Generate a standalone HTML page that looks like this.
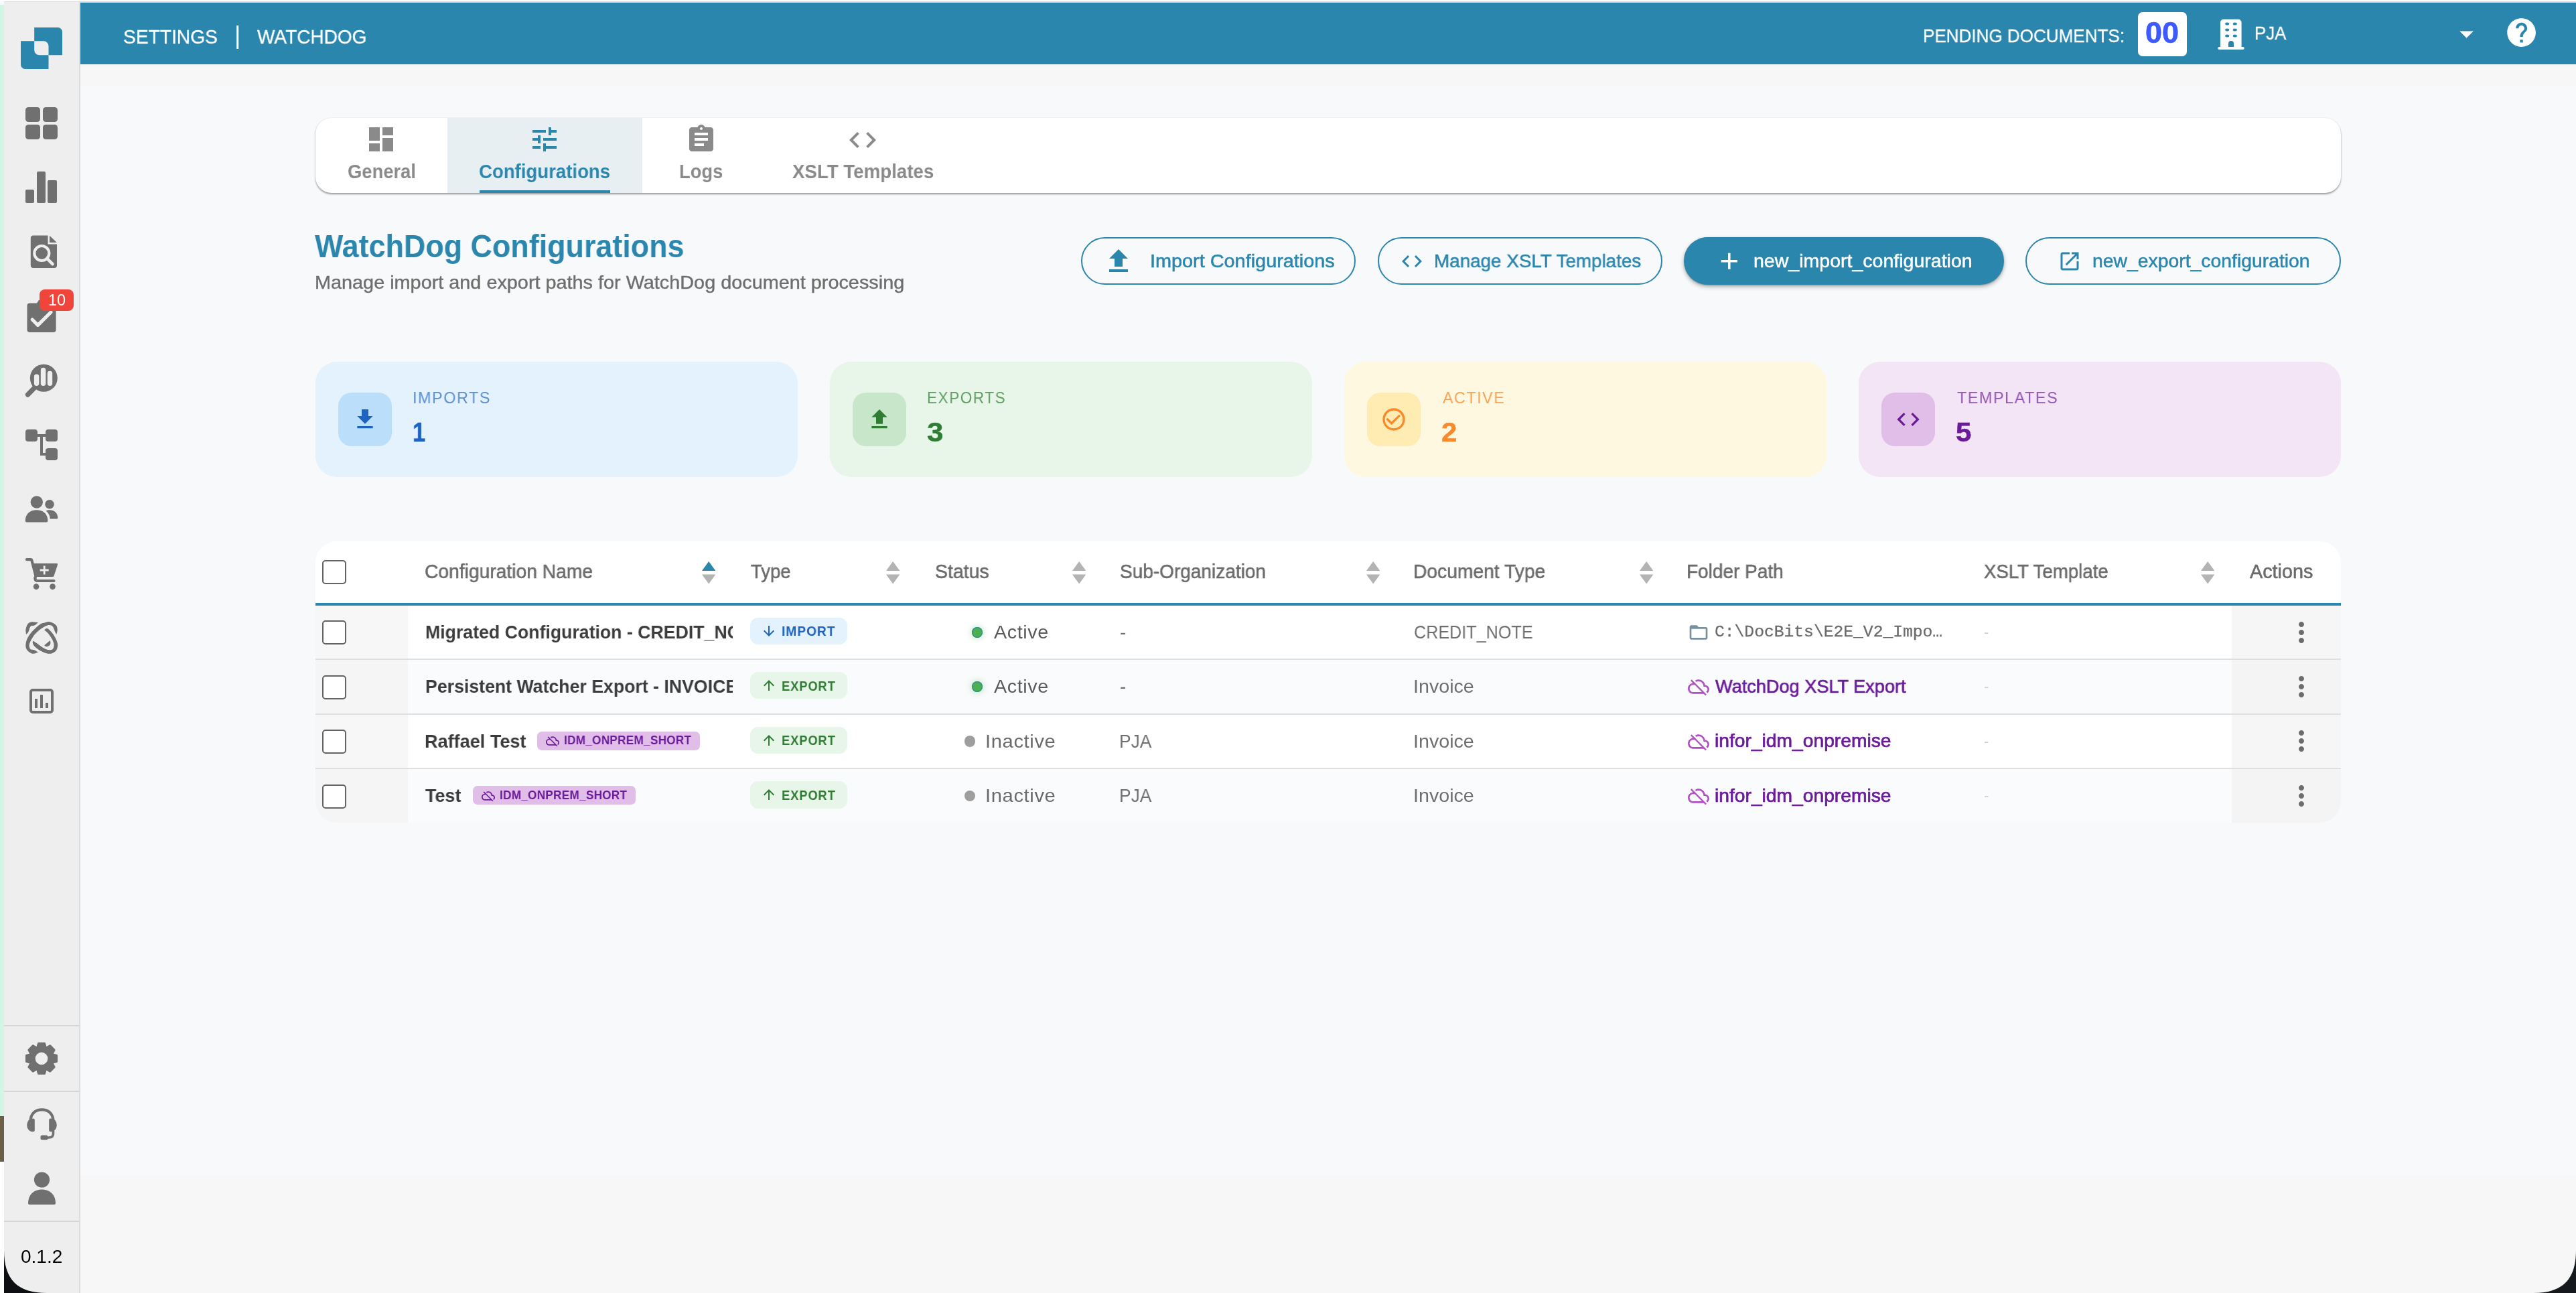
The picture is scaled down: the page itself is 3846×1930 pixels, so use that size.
<!DOCTYPE html>
<html lang="en"><head><meta charset="utf-8"><title>WatchDog Configurations</title>
<style>
html,body{margin:0;padding:0;}
body{width:3846px;height:1930px;position:relative;overflow:hidden;background:#f8f9fb;font-family:"Liberation Sans",sans-serif;}
.b{position:absolute;display:block;}
.t{position:absolute;white-space:nowrap;line-height:1em;font-family:"Liberation Sans",sans-serif;will-change:transform;}
</style></head><body>
<div class="b" style="left:6.00px;top:3.00px;width:3840.00px;height:1927.00px;background:#f8f9fb;"></div>
<div class="b" style="left:120.00px;top:1754.00px;width:3726.00px;height:176.00px;background:#f7f7f7;"></div>
<div class="b" style="left:0.00px;top:7.00px;width:6.00px;height:1659.00px;background:#d3f5e4;"></div>
<div class="b" style="left:0.00px;top:1666.00px;width:6.00px;height:68.00px;background:#6b5f48;"></div>
<div class="b" style="left:0.00px;top:1734.00px;width:6.00px;height:196.00px;background:#ffffff;"></div>
<div class="b" style="left:0.00px;top:0.00px;width:3846.00px;height:2.00px;background:#fdfdfd;"></div>
<div class="b" style="left:6.00px;top:2.00px;width:3840.00px;height:2.00px;background:#dcdcdc;"></div>
<div class="b" style="left:120.00px;top:4.00px;width:3726.00px;height:92.00px;background:#2a86ad;"></div>
<div class="b" style="left:120.00px;top:96.00px;width:3726.00px;height:33.00px;background:linear-gradient(#fcfcfc 0,#fcfcfc 1px,#f7f7f7 1.2px,#f7f7f7 30px,#f8f9fb 33px);"></div>
<div class="b" style="left:6.00px;top:3.00px;width:112.00px;height:1927.00px;background:#eeeeee;"></div>
<div class="b" style="left:118.00px;top:3.00px;width:2.00px;height:1927.00px;background:#dcdcdc;"></div>
<div class="b" style="left:6.00px;top:1530.00px;width:112.00px;height:2.00px;background:#d6d6d6;"></div>
<div class="b" style="left:6.00px;top:1628.00px;width:112.00px;height:2.00px;background:#d6d6d6;"></div>
<div class="b" style="left:6.00px;top:1822.00px;width:112.00px;height:2.00px;background:#d6d6d6;"></div>
<svg class="b" style="left:6.00px;top:1866.00px;" width="64.00" height="64.00" viewBox="0 0 64 64"><path d="M0 0 C0 44 20 64 64 64 L0 64 Z" fill="#0d0f12"/></svg>
<svg class="b" style="left:3782.00px;top:1866.00px;" width="64.00" height="64.00" viewBox="0 0 64 64"><path d="M64 0 C64 44 44 64 0 64 L64 64 Z" fill="#15181c"/></svg>
<svg class="b" style="left:31.00px;top:41.00px;" width="62.00" height="62.00" viewBox="0 0 62 62"><path fill="#2a86ad" d="M20.2 0 H55.5 a6.5 6.5 0 0 1 6.5 6.5 V41.3 H41.5 V27.8 a7.5 7.5 0 0 0 -7.5 -7.5 H20.2 Z"/><path fill="#2a86ad" d="M0 20.3 H20.2 V33.8 a7.5 7.5 0 0 0 7.5 7.5 H41.5 V62 H6.5 a6.5 6.5 0 0 1 -6.5 -6.5 Z"/></svg>
<div class="b" style="left:37.80px;top:159.80px;width:22.30px;height:22.20px;background:#707070;border-radius:4.5px;"></div>
<div class="b" style="left:63.90px;top:159.80px;width:22.30px;height:22.20px;background:#707070;border-radius:4.5px;"></div>
<div class="b" style="left:37.80px;top:186.00px;width:22.30px;height:22.20px;background:#707070;border-radius:4.5px;"></div>
<div class="b" style="left:63.90px;top:186.00px;width:22.30px;height:22.20px;background:#707070;border-radius:4.5px;"></div>
<div class="b" style="left:37.80px;top:282.80px;width:13.50px;height:20.40px;background:#707070;border-radius:2px;"></div>
<div class="b" style="left:54.80px;top:255.90px;width:13.30px;height:47.30px;background:#707070;border-radius:2px;"></div>
<div class="b" style="left:71.20px;top:269.20px;width:13.70px;height:34.00px;background:#707070;border-radius:2px;"></div>
<svg class="b" style="left:45.00px;top:351.00px;" width="41.00" height="49.00" viewBox="0 0 41 49"><path fill="#707070" d="M4.8 .6 H26.5 V13.4 H40 V45 a4 4 0 0 1 -4 4 H4.8 a4 4 0 0 1 -4 -4 V4.6 a4 4 0 0 1 4 -4 Z M29 .8 L39.8 11 H29 Z"/><circle cx="17.3" cy="27" r="11" fill="none" stroke="#eeeeee" stroke-width="4.2"/><path d="M25.5 35.2 L33.5 43.2" stroke="#eeeeee" stroke-width="4.6" stroke-linecap="round"/></svg>
<svg class="b" style="left:40.00px;top:446.00px;" width="45.00" height="51.00" viewBox="0 0 45 51"><path fill="#707070" d="M4.5 6.6 H15 L18 2 H27 L30 6.6 H39.6 a4 4 0 0 1 4 4 V46 a4 4 0 0 1 -4 4 H4.5 a4 4 0 0 1 -4 -4 V10.6 a4 4 0 0 1 4 -4 Z"/><path d="M8.2 31 L16.5 39.3 L36 20" fill="none" stroke="#eeeeee" stroke-width="5.2" stroke-linecap="round" stroke-linejoin="round"/></svg>
<div class="b" style="left:59.00px;top:432.00px;width:51.00px;height:32.00px;background:#f0453a;border-radius:8px;"></div>
<div class="t" id="badge" style="left:72.00px;top:436.53px;font-size:23.5px;color:#fff;font-weight:400;">10</div>
<svg class="b" style="left:36.00px;top:542.00px;" width="54.00" height="52.00" viewBox="0 0 54 52"><circle cx="29.3" cy="22.3" r="20.5" fill="#707070"/><path d="M15.3 37 L5.6 47" stroke="#707070" stroke-width="7.4" stroke-linecap="round"/><rect x="14.9" y="16.5" width="7.4" height="17.4" rx="3.7" fill="#eeeeee"/><rect x="24.8" y="6.8" width="7.5" height="27.1" rx="3.7" fill="#eeeeee"/><rect x="34.8" y="11.8" width="7.4" height="22.1" rx="3.7" fill="#eeeeee"/></svg>
<div class="b" style="left:37.80px;top:641.40px;width:18.40px;height:18.00px;background:#707070;border-radius:4px;"></div>
<div class="b" style="left:68.00px;top:641.40px;width:18.20px;height:18.00px;background:#707070;border-radius:4px;"></div>
<div class="b" style="left:68.00px;top:668.70px;width:18.20px;height:18.20px;background:#707070;border-radius:4px;"></div>
<div class="b" style="left:55.00px;top:648.00px;width:14.00px;height:4.30px;background:#707070;"></div>
<div class="b" style="left:60.00px;top:648.00px;width:4.30px;height:31.70px;background:#707070;border-radius:0 0 0 2px;"></div>
<div class="b" style="left:60.00px;top:675.50px;width:9.00px;height:4.20px;background:#707070;"></div>
<svg class="b" style="left:37.00px;top:738.00px;" width="50.00" height="43.00" viewBox="0 0 50 43"><circle cx="17.8" cy="11.5" r="9.2" fill="#707070"/><path fill="#707070" d="M.8 39.5 C.8 29 8 23.3 17.6 23.3 S34.4 29 34.4 39.5 a2 2 0 0 1 -2 2 H2.8 a2 2 0 0 1 -2 -2 Z"/><circle cx="37" cy="14.7" r="6.8" fill="#707070"/><path fill="#707070" d="M31.5 24.6 C33.5 23.6 35.2 23.3 37.2 23.3 C44 23.3 49.3 28 49.3 35 a1.6 1.6 0 0 1 -1.6 1.6 H37.8 C37.6 31.5 35.3 27.4 31.5 24.6 Z"/></svg>
<svg class="b" style="left:37.00px;top:832.00px;" width="50.00" height="49.00" viewBox="0 0 50 49"><path fill="none" stroke="#707070" stroke-width="4.2" stroke-linecap="round" stroke-linejoin="round" d="M3 3.2 H8.5 a2 2 0 0 1 2 1.5 L16.5 28 C15 30 14.5 35 19 35 H43.5"/><path fill="#707070" d="M11.3 9 H47.8 a1.4 1.4 0 0 1 1.3 1.8 L43.6 27.6 a2 2 0 0 1 -1.9 1.3 H16.5 Z"/><circle cx="17.1" cy="43.6" r="4.3" fill="#707070"/><circle cx="41.5" cy="43.6" r="4.3" fill="#707070"/><path d="M22.7 19 H35.7 M29.2 12.5 V25.5" stroke="#eeeeee" stroke-width="2.8"/></svg>
<svg class="b" style="left:30.00px;top:920.00px;" width="64.00" height="64.00" viewBox="0 0 64 64"><path fill="#707070" d="M9.2 27 C9.07 25.80 8.03 22.40 8.40 19.80 C8.77 17.20 9.92 13.33 11.40 11.40 C12.88 9.47 14.70 8.57 17.30 8.20 C19.90 7.83 25.38 9.03 27.00 9.20 C26.05 9.93 23.08 12.73 21.30 13.60 C19.52 14.47 17.45 13.78 16.30 14.40 C15.15 15.02 15.05 15.82 14.40 17.30 C13.75 18.78 13.27 21.68 12.40 23.30 C11.53 24.92 9.73 26.38 9.20 27.00 Z"/><path fill="#707070" d="M54.5 26.7 C54.70 25.55 55.87 22.10 55.70 19.80 C55.53 17.50 55.37 14.83 53.50 12.90 C51.63 10.97 47.15 8.82 44.50 8.20 C41.85 7.58 40.07 8.58 37.60 9.20 C35.13 9.82 32.67 9.97 29.70 11.90 C26.73 13.83 22.85 17.50 19.80 20.80 C16.75 24.10 13.30 28.17 11.40 31.70 C9.50 35.23 8.65 39.03 8.40 42.00 C8.15 44.97 8.58 47.33 9.90 49.50 C11.22 51.67 14.40 54.02 16.30 55.00 C18.20 55.98 19.52 55.62 21.30 55.40 C23.08 55.18 26.05 53.98 27.00 53.70 C26.05 53.12 23.08 50.90 21.30 50.20 C19.52 49.50 17.50 50.12 16.30 49.50 C15.10 48.88 14.47 47.98 14.10 46.50 C13.73 45.02 13.15 43.40 14.10 40.60 C15.05 37.80 17.53 32.92 19.80 29.70 C22.07 26.48 24.82 23.77 27.70 21.30 C30.58 18.83 34.38 16.27 37.10 14.90 C39.82 13.53 42.10 13.10 44.00 13.10 C45.90 13.10 47.42 13.95 48.50 14.90 C49.58 15.85 49.83 17.32 50.50 18.80 C51.17 20.28 51.83 22.48 52.50 23.80 C53.17 25.12 54.17 26.22 54.50 26.70 Z"/><path fill="#707070" d="M36.1 20.3 C36.85 19.93 38.78 17.52 40.60 18.10 C42.42 18.68 45.02 21.53 47.00 23.80 C48.98 26.07 51.05 29.07 52.50 31.70 C53.95 34.33 55.13 37.30 55.70 39.60 C56.27 41.90 56.27 43.52 55.90 45.50 C55.53 47.48 54.98 49.85 53.50 51.50 C52.02 53.15 49.32 54.78 47.00 55.40 C44.68 56.02 42.48 55.93 39.60 55.20 C36.72 54.47 32.75 52.77 29.70 51.00 C26.65 49.23 23.12 46.50 21.30 44.60 C19.48 42.70 19.13 40.97 18.80 39.60 C18.47 38.23 19.22 36.93 19.30 36.40 C20.22 37.02 22.65 38.58 24.80 40.10 C26.95 41.62 29.73 43.93 32.20 45.50 C34.67 47.07 37.38 48.72 39.60 49.50 C41.82 50.28 43.93 50.37 45.50 50.20 C47.07 50.03 48.17 49.43 49.00 48.50 C49.83 47.57 50.33 46.08 50.50 44.60 C50.67 43.12 50.58 41.58 50.00 39.60 C49.42 37.62 48.32 35.02 47.00 32.70 C45.68 30.38 43.92 27.77 42.10 25.70 C40.28 23.63 37.10 21.20 36.10 20.30 Z"/><path fill="#707070" d="M44.8 35.9 L36.1 43.3 Q39 46.8 43.6 43.8 Q46.6 40.5 44.8 35.9 Z"/></svg>
<div class="b" style="left:44.00px;top:1028.40px;width:36.20px;height:36.50px;background:transparent;border:4.2px solid #707070;border-radius:5px;box-sizing:border-box;"></div>
<div class="b" style="left:52.00px;top:1043.00px;width:4.20px;height:13.70px;background:#707070;"></div>
<div class="b" style="left:60.00px;top:1037.00px;width:4.30px;height:19.70px;background:#707070;"></div>
<div class="b" style="left:68.00px;top:1048.90px;width:4.20px;height:7.80px;background:#707070;"></div>
<svg class="b" style="left:36.00px;top:1554.00px;" width="52.00" height="52.00" viewBox="0 0 52 52"><path fill="#707070" stroke="#707070" stroke-width="3" stroke-linejoin="round" d="M19.62 9.70 L21.51 3.44 L30.49 3.44 L32.38 9.70 L33.01 9.97 L38.78 6.88 L45.12 13.22 L42.03 18.99 L42.30 19.62 L48.56 21.51 L48.56 30.49 L42.30 32.38 L42.03 33.01 L45.12 38.78 L38.78 45.12 L33.01 42.03 L32.38 42.30 L30.49 48.56 L21.51 48.56 L19.62 42.30 L18.99 42.03 L13.22 45.12 L6.88 38.78 L9.97 33.01 L9.70 32.38 L3.44 30.49 L3.44 21.51 L9.70 19.62 L9.97 18.99 L6.88 13.22 L13.22 6.88 L18.99 9.97 Z"/><circle cx="26" cy="26" r="9.3" fill="#eeeeee"/></svg>
<svg class="b" style="left:38.00px;top:1652.00px;" width="50.00" height="52.00" viewBox="0 0 50 52"><path fill="none" stroke="#707070" stroke-width="4.2" stroke-linecap="round" d="M7.5 22 C7.5 10 15 4.3 24.500 4.300 S41.5 10 41.5 22"/><path fill="#707070" d="M11.5 17.5 a2.300 2.300 0 0 1 2.300 2.300 V35 a2.300 2.300 0 0 1 -2.300 2.300 C6 37.300 2.300 33 2.300 27.400 S6 17.5 11.500 17.500 Z"/><path fill="#707070" d="M37.5 17.5 a2.300 2.300 0 0 0 -2.300 2.300 V35 a2.300 2.300 0 0 0 2.300 2.300 C43 37.300 46.700 33 46.700 27.400 S43 17.5 37.500 17.500 Z"/><path fill="none" stroke="#707070" stroke-width="3.6" stroke-linecap="round" d="M41.5 36 V40 C41.500 44 39 46 35 46 H26"/><rect x="22.5" y="42.6" width="11" height="7" rx="2.500" fill="#707070"/></svg>
<svg class="b" style="left:40.00px;top:1748.00px;" width="46.00" height="52.00" viewBox="0 0 46 52"><circle cx="22.5" cy="13" r="11.6" fill="#707070"/><path fill="#707070" d="M2 48 C2 36 10 27.500 22.500 27.500 S43 36 43 48 a2 2 0 0 1 -2 2 H4 a2 2 0 0 1 -2 -2 Z"/></svg>
<div class="t" id="ver" style="left:31.00px;top:1862.35px;font-size:28px;color:#000;font-weight:400;">0.1.2</div>
<div class="t" id="h1" style="left:183.50px;top:40.04px;font-size:29.6px;color:#fff;font-weight:400;-webkit-text-stroke:0.35px #fff;transform:scaleX(0.9521);transform-origin:0 0;">SETTINGS</div>
<div class="t" id="hbar" style="left:350.30px;top:34.60px;font-size:36px;color:#fff;font-weight:400;font-weight:400;">|</div>
<div class="t" id="h2" style="left:384.00px;top:40.04px;font-size:29.6px;color:#fff;font-weight:400;-webkit-text-stroke:0.35px #fff;transform:scaleX(0.9474);transform-origin:0 0;">WATCHDOG</div>
<div class="t" id="h3" style="left:2871.00px;top:40.25px;font-size:28px;color:#fff;font-weight:400;-webkit-text-stroke:0.3px #fff;transform:scaleX(0.9306);transform-origin:0 0;">PENDING DOCUMENTS:</div>
<div class="b" style="left:3191.80px;top:18.00px;width:73.50px;height:66.00px;background:#fff;border-radius:7px;"></div>
<div class="t" id="h4" style="left:3203.00px;top:27.06px;font-size:44px;color:#3d5afe;font-weight:700;-webkit-text-stroke:0.7px #3d5afe;transform:scaleX(1.0220);transform-origin:0 0;">00</div>
<svg class="b" style="left:3310.00px;top:26.00px;" width="42.00" height="50.00" viewBox="0 0 42 50"><path fill="#fff" d="M10 2.800 H31.600 a5 5 0 0 1 5 5 V44 H38.700 a2 2 0 0 1 0 4 H3.300 a2 2 0 0 1 0 -4 H5 V7.800 a5 5 0 0 1 5 -5 Z"/><ellipse cx="15.2" cy="9.6" rx="3" ry="2" fill="#2a86ad"/><ellipse cx="15.2" cy="18.6" rx="3" ry="2" fill="#2a86ad"/><ellipse cx="15.2" cy="27.5" rx="3" ry="2" fill="#2a86ad"/><ellipse cx="26.8" cy="9.6" rx="3" ry="2" fill="#2a86ad"/><ellipse cx="26.8" cy="18.6" rx="3" ry="2" fill="#2a86ad"/><ellipse cx="26.8" cy="27.5" rx="3" ry="2" fill="#2a86ad"/><path fill="#2a86ad" d="M17 44 V39 a4 4 0 0 1 8 0 V44 Z"/></svg>
<div class="t" id="h5" style="left:3366.00px;top:35.65px;font-size:28px;color:#fff;font-weight:400;-webkit-text-stroke:0.3px #fff;transform:scaleX(0.9210);transform-origin:0 0;">PJA</div>
<svg class="b" style="left:3657.90px;top:25.60px;" width="49.20" height="49.20" viewBox="0 0 24 24"><path fill="#fff" d="M7 10l5 5 5-5z"/></svg>
<svg class="b" style="left:3738.60px;top:23.00px;" width="51.20" height="51.20" viewBox="0 0 24 24"><path fill="#fff" d="M12 2C6.48 2 2 6.48 2 12s4.48 10 10 10 10-4.48 10-10S17.52 2 12 2zm1 17h-2v-2h2v2zm2.07-7.75l-.9.92C13.45 12.9 13 13.5 13 15h-2v-.5c0-1.1.45-2.1 1.17-2.83l1.24-1.26c.37-.36.59-.86.59-1.41 0-1.1-.9-2-2-2s-2 .9-2 2H8c0-2.21 1.79-4 4-4s4 1.79 4 4c0 .88-.36 1.68-.93 2.25z"/></svg>
<div class="b" style="left:471.00px;top:175.50px;width:3024.00px;height:112.00px;background:#fff;border-radius:24px;box-shadow:0 2px 2.5px rgba(0,0,0,.36),0 0 1.5px rgba(0,0,0,.12);"></div>
<div class="b" style="left:668.00px;top:175.50px;width:291.00px;height:112.00px;background:#e8eff3;"></div>
<div class="b" style="left:716.00px;top:283.50px;width:195.00px;height:4.00px;background:#2a86ad;"></div>
<svg class="b" style="left:545.20px;top:183.70px;" width="48.00" height="48.00" viewBox="0 0 24 24"><path fill="#8a8a8a" d="M3 13h8V3H3v10zm0 8h8v-6H3v6zm10 0h8V11h-8v10zm0-18v6h8V3h-8z"/></svg>
<svg class="b" style="left:789.40px;top:183.70px;" width="48.00" height="48.00" viewBox="0 0 24 24"><path fill="#2a86ad" d="M3 17v2h6v-2H3zM3 5v2h10V5H3zm10 16v-2h8v-2h-8v-2h-2v6h2zM7 9v2H3v2h4v2h2V9H7zm14 4v-2H11v2h10zm-6-4h2V7h4V5h-4V3h-2v6z"/></svg>
<svg class="b" style="left:1022.80px;top:184.30px;" width="48.00" height="48.00" viewBox="0 0 24 24"><path fill="#8a8a8a" d="M19 3h-4.18C14.4 1.84 13.3 1 12 1c-1.3 0-2.4.84-2.82 2H5c-1.1 0-2 .9-2 2v14c0 1.1.9 2 2 2h14c1.1 0 2-.9 2-2V5c0-1.1-.9-2-2-2zm-7 0c.55 0 1 .45 1 1s-.45 1-1 1-1-.45-1-1 .45-1 1-1zm2 14H7v-2h7v2zm3-4H7v-2h10v2zm0-4H7V7h10v2z"/></svg>
<svg class="b" style="left:1264.20px;top:184.50px;" width="48.00" height="48.00" viewBox="0 0 24 24"><path fill="#8a8a8a" d="M9.4 16.6L4.8 12l4.6-4.6L8 6l-6 6 6 6 1.4-1.4zm5.2 0l4.6-4.6-4.6-4.6L16 6l6 6-6 6-1.4-1.4z"/></svg>
<div class="t" id="tab1" style="left:518.50px;top:242.12px;font-size:29px;color:#8a8a8a;font-weight:700;transform:scaleX(0.9434);transform-origin:0 0;">General</div>
<div class="t" id="tab2" style="left:715.00px;top:242.12px;font-size:29px;color:#2a86ad;font-weight:700;transform:scaleX(0.9510);transform-origin:0 0;">Configurations</div>
<div class="t" id="tab3" style="left:1013.70px;top:242.12px;font-size:29px;color:#8a8a8a;font-weight:700;transform:scaleX(0.9408);transform-origin:0 0;">Logs</div>
<div class="t" id="tab4" style="left:1182.90px;top:242.12px;font-size:29px;color:#8a8a8a;font-weight:700;transform:scaleX(0.9542);transform-origin:0 0;">XSLT Templates</div>
<div class="t" id="title" style="left:470.30px;top:343.54px;font-size:48px;color:#2a86ad;font-weight:700;transform:scaleX(0.9344);transform-origin:0 0;">WatchDog Configurations</div>
<div class="t" id="sub" style="left:469.50px;top:407.95px;font-size:28px;color:#6e6e6e;font-weight:400;-webkit-text-stroke:0.4px #6e6e6e;transform:scaleX(1.0295);transform-origin:0 0;">Manage import and export paths for WatchDog document processing</div>
<div class="b" style="left:1614.20px;top:354.20px;width:410.20px;height:71.20px;background:transparent;border:2.4px solid #2a86ad;border-radius:35.6px;box-sizing:border-box;"></div>
<div class="b" style="left:2057.40px;top:354.20px;width:424.30px;height:71.20px;background:transparent;border:2.4px solid #2a86ad;border-radius:35.6px;box-sizing:border-box;"></div>
<div class="b" style="left:2513.90px;top:354.30px;width:478.00px;height:70.80px;background:#2a86ad;border-radius:35.4px;box-shadow:0 3px 6px rgba(0,0,0,.3),0 1px 2px rgba(0,0,0,.2);"></div>
<div class="b" style="left:3024.20px;top:354.20px;width:470.40px;height:71.20px;background:transparent;border:2.4px solid #2a86ad;border-radius:35.6px;box-sizing:border-box;"></div>
<svg class="b" style="left:1646.00px;top:366.00px;" width="48.00" height="48.00" viewBox="0 0 24 24"><path fill="#2a86ad" d="M9 16h6v-6h4l-7-7-7 7h4zm-4 2h14v2H5z"/></svg>
<svg class="b" style="left:2089.80px;top:372.30px;" width="36.00" height="36.00" viewBox="0 0 24 24"><path fill="#2a86ad" d="M9.4 16.6L4.8 12l4.6-4.6L8 6l-6 6 6 6 1.4-1.4zm5.2 0l4.6-4.6-4.6-4.6L16 6l6 6-6 6-1.4-1.4z"/></svg>
<svg class="b" style="left:2561.40px;top:369.00px;" width="41.60" height="41.60" viewBox="0 0 24 24"><path fill="#fff" d="M19 13h-6v6h-2v-6H5v-2h6V5h2v6h6v2z"/></svg>
<svg class="b" style="left:3072.20px;top:372.00px;" width="36.00" height="36.00" viewBox="0 0 24 24"><path fill="#2a86ad" d="M19 19H5V5h7V3H5c-1.11 0-2 .9-2 2v14c0 1.1.89 2 2 2h14c1.1 0 2-.9 2-2v-7h-2v7zM14 3v2h3.59l-9.83 9.83 1.41 1.41L19 6.41V10h2V3h-7z"/></svg>
<div class="t" id="b1" style="left:1716.50px;top:376.35px;font-size:28px;color:#2a86ad;font-weight:400;-webkit-text-stroke:0.55px #2a86ad;transform:scaleX(1.0301);transform-origin:0 0;">Import Configurations</div>
<div class="t" id="b2" style="left:2140.50px;top:376.35px;font-size:28px;color:#2a86ad;font-weight:400;-webkit-text-stroke:0.55px #2a86ad;transform:scaleX(0.9935);transform-origin:0 0;">Manage XSLT Templates</div>
<div class="t" id="b3" style="left:2617.50px;top:376.35px;font-size:28px;color:#fff;font-weight:400;-webkit-text-stroke:0.5px #fff;transform:scaleX(1.0188);transform-origin:0 0;">new_import_configuration</div>
<div class="t" id="b4" style="left:3123.80px;top:376.35px;font-size:28px;color:#2a86ad;font-weight:400;-webkit-text-stroke:0.5px #2a86ad;transform:scaleX(1.0124);transform-origin:0 0;">new_export_configuration</div>
<div class="b" style="left:471.30px;top:540.00px;width:719.70px;height:171.80px;background:#e3f2fd;border-radius:32px;"></div>
<div class="b" style="left:505.00px;top:586.00px;width:80.00px;height:80.00px;background:#bbdefb;border-radius:20px;"></div>
<svg class="b" style="left:525.00px;top:606.00px;" width="40.00" height="40.00" viewBox="0 0 24 24"><path fill="#1e63c0" d="M19 9h-4V3H9v6H5l7 7 7-7zM5 18v2h14v-2H5z"/></svg>
<div class="t" id="cl0" style="left:615.60px;top:581.97px;font-size:24px;color:#5b8fd0;font-weight:400;letter-spacing:1.6px;transform:scaleX(0.9743);transform-origin:0 0;">IMPORTS</div>
<div class="t" id="cv0" style="left:615.80px;top:624.98px;font-size:40px;color:#1e63c0;font-weight:700;-webkit-text-stroke:0.5px #1e63c0;transform:scaleX(0.8600);transform-origin:0 0;">1</div>
<div class="b" style="left:1239.30px;top:540.00px;width:719.70px;height:171.80px;background:#e8f5e9;border-radius:32px;"></div>
<div class="b" style="left:1273.00px;top:586.00px;width:80.00px;height:80.00px;background:#c8e6c9;border-radius:20px;"></div>
<svg class="b" style="left:1293.00px;top:606.00px;" width="40.00" height="40.00" viewBox="0 0 24 24"><path fill="#2e7d32" d="M9 16h6v-6h4l-7-7-7 7h4zm-4 2h14v2H5z"/></svg>
<div class="t" id="cl1" style="left:1383.60px;top:581.97px;font-size:24px;color:#5e9d62;font-weight:400;letter-spacing:1.6px;transform:scaleX(0.9426);transform-origin:0 0;">EXPORTS</div>
<div class="t" id="cv1" style="left:1384.30px;top:624.98px;font-size:40px;color:#2e7d32;font-weight:700;-webkit-text-stroke:0.5px #2e7d32;transform:scaleX(1.1000);transform-origin:0 0;">3</div>
<div class="b" style="left:2007.30px;top:540.00px;width:719.70px;height:171.80px;background:#fff8e1;border-radius:32px;"></div>
<div class="b" style="left:2041.00px;top:586.00px;width:80.00px;height:80.00px;background:#ffecb3;border-radius:20px;"></div>
<svg class="b" style="left:2061.00px;top:606.00px;" width="40.00" height="40.00" viewBox="0 0 24 24"><path fill="#f98a2b" d="M16.59 7.58L10 14.17l-3.59-3.58L5 12l5 5 8-8zM12 2C6.48 2 2 6.48 2 12s4.48 10 10 10 10-4.48 10-10S17.52 2 12 2zm0 18c-4.42 0-8-3.58-8-8s3.58-8 8-8 8 3.58 8 8-3.58 8-8 8z"/></svg>
<div class="t" id="cl2" style="left:2153.60px;top:581.97px;font-size:24px;color:#f7a253;font-weight:400;letter-spacing:1.6px;transform:scaleX(0.9684);transform-origin:0 0;">ACTIVE</div>
<div class="t" id="cv2" style="left:2152.30px;top:624.98px;font-size:40px;color:#f98a2b;font-weight:700;-webkit-text-stroke:0.5px #f98a2b;transform:scaleX(1.0518);transform-origin:0 0;">2</div>
<div class="b" style="left:2775.30px;top:540.00px;width:719.70px;height:171.80px;background:#f3e5f5;border-radius:32px;"></div>
<div class="b" style="left:2809.00px;top:586.00px;width:80.00px;height:80.00px;background:#e1bee7;border-radius:20px;"></div>
<svg class="b" style="left:2829.00px;top:606.00px;" width="40.00" height="40.00" viewBox="0 0 24 24"><path fill="#6a1b9a" d="M9.4 16.6L4.8 12l4.6-4.6L8 6l-6 6 6 6 1.4-1.4zm5.2 0l4.6-4.6-4.6-4.6L16 6l6 6-6 6-1.4-1.4z"/></svg>
<div class="t" id="cl3" style="left:2921.60px;top:581.97px;font-size:24px;color:#9355b5;font-weight:400;letter-spacing:1.6px;transform:scaleX(0.9738);transform-origin:0 0;">TEMPLATES</div>
<div class="t" id="cv3" style="left:2920.30px;top:624.98px;font-size:40px;color:#6a1b9a;font-weight:700;-webkit-text-stroke:0.5px #6a1b9a;transform:scaleX(1.0516);transform-origin:0 0;">5</div>
<div class="b" style="left:471.00px;top:808.30px;width:3024.00px;height:419.40px;background:#fff;border-radius:32px;overflow:hidden;"></div>
<div class="b" style="left:471.00px;top:904.00px;width:3024.00px;height:79.00px;background:#ffffff;"></div>
<div class="b" style="left:471.00px;top:904.00px;width:137.80px;height:79.00px;background:#f7f7f7;"></div>
<div class="b" style="left:3331.70px;top:904.00px;width:163.30px;height:79.00px;background:#f6f6f6;"></div>
<div class="b" style="left:471.00px;top:983.00px;width:3024.00px;height:2.00px;background:#dedfe0;"></div>
<div class="b" style="left:471.00px;top:985.00px;width:3024.00px;height:79.60px;background:#fafbfc;"></div>
<div class="b" style="left:471.00px;top:985.00px;width:137.80px;height:79.60px;background:#f5f5f5;"></div>
<div class="b" style="left:3331.70px;top:985.00px;width:163.30px;height:79.60px;background:#f4f4f5;"></div>
<div class="b" style="left:471.00px;top:1064.60px;width:3024.00px;height:2.00px;background:#dedfe0;"></div>
<div class="b" style="left:471.00px;top:1066.60px;width:3024.00px;height:79.60px;background:#ffffff;"></div>
<div class="b" style="left:471.00px;top:1066.60px;width:137.80px;height:79.60px;background:#f7f7f7;"></div>
<div class="b" style="left:3331.70px;top:1066.60px;width:163.30px;height:79.60px;background:#f6f6f6;"></div>
<div class="b" style="left:471.00px;top:1146.20px;width:3024.00px;height:2.00px;background:#dedfe0;"></div>
<div class="b" style="left:471.00px;top:1148.20px;width:3024.00px;height:79.50px;background:#fafbfc;border-radius:0 0 32px 32px;"></div>
<div class="b" style="left:471.00px;top:1148.20px;width:137.80px;height:79.50px;background:#f5f5f5;border-radius:0 0 0 32px;"></div>
<div class="b" style="left:3331.70px;top:1148.20px;width:163.30px;height:79.50px;background:#f4f4f5;border-radius:0 0 32px 0;"></div>
<div class="b" style="left:471.00px;top:900.00px;width:3024.00px;height:4.00px;background:#2a86ad;"></div>
<div class="b" style="left:481.00px;top:835.80px;width:36.00px;height:36.00px;background:#fff;border:2px solid #636363;border-radius:5px;box-sizing:border-box;"></div>
<div class="t" id="th0" style="left:634.20px;top:839.24px;font-size:28.8px;color:#6b6b6b;font-weight:400;-webkit-text-stroke:0.55px #6b6b6b;transform:scaleX(0.9806);transform-origin:0 0;">Configuration Name</div>
<div class="t" id="th1" style="left:1120.80px;top:839.24px;font-size:28.8px;color:#6b6b6b;font-weight:400;-webkit-text-stroke:0.55px #6b6b6b;transform:scaleX(0.9516);transform-origin:0 0;">Type</div>
<div class="t" id="th2" style="left:1395.80px;top:839.24px;font-size:28.8px;color:#6b6b6b;font-weight:400;-webkit-text-stroke:0.55px #6b6b6b;transform:scaleX(0.9882);transform-origin:0 0;">Status</div>
<div class="t" id="th3" style="left:1672.00px;top:839.24px;font-size:28.8px;color:#6b6b6b;font-weight:400;-webkit-text-stroke:0.55px #6b6b6b;transform:scaleX(0.9728);transform-origin:0 0;">Sub-Organization</div>
<div class="t" id="th4" style="left:2109.50px;top:839.24px;font-size:28.8px;color:#6b6b6b;font-weight:400;-webkit-text-stroke:0.55px #6b6b6b;transform:scaleX(0.9800);transform-origin:0 0;">Document Type</div>
<div class="t" id="th5" style="left:2518.00px;top:839.24px;font-size:28.8px;color:#6b6b6b;font-weight:400;-webkit-text-stroke:0.55px #6b6b6b;transform:scaleX(0.9726);transform-origin:0 0;">Folder Path</div>
<div class="t" id="th6" style="left:2962.00px;top:839.24px;font-size:28.8px;color:#6b6b6b;font-weight:400;-webkit-text-stroke:0.55px #6b6b6b;transform:scaleX(0.9583);transform-origin:0 0;">XSLT Template</div>
<div class="t" id="th7" style="left:3358.50px;top:839.24px;font-size:28.8px;color:#6b6b6b;font-weight:400;-webkit-text-stroke:0.55px #6b6b6b;">Actions</div>
<svg class="b" style="left:1047.50px;top:837.50px;" width="20.40" height="34.00" viewBox="0 0 20.4 34"><path d="M10.2 0 L20.4 14 H0 Z" fill="#2a86ad"/><path d="M0 19.4 H20.4 L10.2 33.400 Z" fill="#b3b3b3"/></svg>
<svg class="b" style="left:1323.30px;top:837.50px;" width="20.40" height="34.00" viewBox="0 0 20.4 34"><path d="M10.2 0 L20.4 14 H0 Z" fill="#b3b3b3"/><path d="M0 19.4 H20.4 L10.2 33.400 Z" fill="#b3b3b3"/></svg>
<svg class="b" style="left:1600.80px;top:837.50px;" width="20.40" height="34.00" viewBox="0 0 20.4 34"><path d="M10.2 0 L20.4 14 H0 Z" fill="#b3b3b3"/><path d="M0 19.4 H20.4 L10.2 33.400 Z" fill="#b3b3b3"/></svg>
<svg class="b" style="left:2039.50px;top:837.50px;" width="20.40" height="34.00" viewBox="0 0 20.4 34"><path d="M10.2 0 L20.4 14 H0 Z" fill="#b3b3b3"/><path d="M0 19.4 H20.4 L10.2 33.400 Z" fill="#b3b3b3"/></svg>
<svg class="b" style="left:2447.80px;top:837.50px;" width="20.40" height="34.00" viewBox="0 0 20.4 34"><path d="M10.2 0 L20.4 14 H0 Z" fill="#b3b3b3"/><path d="M0 19.4 H20.4 L10.2 33.400 Z" fill="#b3b3b3"/></svg>
<svg class="b" style="left:3285.80px;top:837.50px;" width="20.40" height="34.00" viewBox="0 0 20.4 34"><path d="M10.2 0 L20.4 14 H0 Z" fill="#b3b3b3"/><path d="M0 19.4 H20.4 L10.2 33.400 Z" fill="#b3b3b3"/></svg>
<div class="b" style="left:481.00px;top:926.20px;width:36.00px;height:36.00px;background:#fff;border:2px solid #636363;border-radius:5px;box-sizing:border-box;"></div>
<div class="b" style="left:608.8px;top:904px;width:485.400px;height:79px;overflow:hidden;">
<div class="t" id="nm0" style="left:26.20px;top:25.85px;font-size:28px;font-weight:700;color:#3b3b3b;transform:scaleX(0.953);transform-origin:0 0;">Migrated Configuration - CREDIT_NOTE</div>
</div>
<div class="b" style="left:1120.10px;top:921.90px;width:144.90px;height:40.20px;background:#e3f2fd;border-radius:12px;"></div>
<svg class="b" style="left:1135.90px;top:929.70px;" width="24.00" height="24.00" viewBox="0 0 24 24"><path fill="#1e63c0" d="M20 12l-1.41-1.41L13 16.17V4h-2v12.17l-5.58-5.59L4 12l8 8 8-8z"/></svg>
<div class="t" id="ty0" style="left:1167.30px;top:932.26px;font-size:20.2px;color:#1e63c0;font-weight:700;letter-spacing:1.0px;transform:scaleX(0.9517);transform-origin:0 0;">IMPORT</div>
<div class="b" style="left:1451.00px;top:935.50px;width:16.20px;height:16.20px;background:#4caf50;border-radius:50%;box-shadow:0 0 8px 2px rgba(76,175,80,.28), inset 0 0 0 1.2px rgba(40,130,170,.8);"></div>
<div class="t" id="st0" style="left:1484.00px;top:929.85px;font-size:28px;color:#5a5a5a;font-weight:400;letter-spacing:0.6px;transform:scaleX(1.0256);transform-origin:0 0;">Active</div>
<div class="t" id="so0" style="left:1672.00px;top:929.85px;font-size:28px;color:#6e6e6e;font-weight:400;">-</div>
<div class="t" id="dt0" style="left:2110.50px;top:929.85px;font-size:28px;color:#6e6e6e;font-weight:400;transform:scaleX(0.8988);transform-origin:0 0;">CREDIT_NOTE</div>
<svg class="b" style="left:2519.60px;top:927.50px;" width="32.00" height="32.00" viewBox="0 0 24 24"><path fill="#78909c" d="M20 6h-8l-2-2H4c-1.1 0-1.99.9-1.99 2L2 18c0 1.1.9 2 2 2h16c1.1 0 2-.9 2-2V8c0-1.1-.9-2-2-2zm0 12H4V8h16v10z"/></svg>
<div class="t" id="path0" style="left:2560.00px;top:931.94px;font-size:24.5px;color:#6a6a6a;font-weight:400;font-family:'Liberation Mono', monospace;-webkit-text-stroke:0.3px #6a6a6a;transform:scaleX(1.0059);transform-origin:0 0;">C:\DocBits\E2E_V2_Impo…</div>
<div class="t" id="x0" style="left:2962.00px;top:932.63px;font-size:22px;color:#cfcfcf;font-weight:400;">-</div>
<svg class="b" style="left:3412.00px;top:919.50px;" width="48.00" height="48.00" viewBox="0 0 24 24"><path fill="#6c6c6c" d="M12 8c1.1 0 2-.9 2-2s-.9-2-2-2-2 .9-2 2 .9 2 2 2zm0 2c-1.1 0-2 .9-2 2s.9 2 2 2 2-.9 2-2-.9-2-2-2zm0 6c-1.1 0-2 .9-2 2s.9 2 2 2 2-.9 2-2-.9-2-2-2z"/></svg>
<div class="b" style="left:481.00px;top:1007.50px;width:36.00px;height:36.00px;background:#fff;border:2px solid #636363;border-radius:5px;box-sizing:border-box;"></div>
<div class="b" style="left:608.8px;top:985px;width:485.400px;height:79.59999999999991px;overflow:hidden;">
<div class="t" id="nm1" style="left:26.20px;top:26.15px;font-size:28px;font-weight:700;color:#3b3b3b;transform:scaleX(0.953);transform-origin:0 0;">Persistent Watcher Export - INVOICE</div>
</div>
<div class="b" style="left:1120.10px;top:1003.20px;width:144.90px;height:40.20px;background:#e8f5e9;border-radius:12px;"></div>
<svg class="b" style="left:1135.90px;top:1011.00px;" width="24.00" height="24.00" viewBox="0 0 24 24"><path fill="#2e7d32" d="M4 12l1.41 1.41L11 7.83V20h2V7.83l5.58 5.59L20 12l-8-8-8 8z"/></svg>
<div class="t" id="ty1" style="left:1167.30px;top:1013.56px;font-size:20.2px;color:#2e7d32;font-weight:700;letter-spacing:1.0px;transform:scaleX(0.9067);transform-origin:0 0;">EXPORT</div>
<div class="b" style="left:1451.00px;top:1016.80px;width:16.20px;height:16.20px;background:#4caf50;border-radius:50%;box-shadow:0 0 8px 2px rgba(76,175,80,.28), inset 0 0 0 1.2px rgba(40,130,170,.8);"></div>
<div class="t" id="st1" style="left:1484.00px;top:1011.15px;font-size:28px;color:#5a5a5a;font-weight:400;letter-spacing:0.6px;transform:scaleX(1.0256);transform-origin:0 0;">Active</div>
<div class="t" id="so1" style="left:1672.00px;top:1011.15px;font-size:28px;color:#6e6e6e;font-weight:400;">-</div>
<div class="t" id="dt1" style="left:2109.50px;top:1011.15px;font-size:28px;color:#6e6e6e;font-weight:400;transform:scaleX(1.0235);transform-origin:0 0;">Invoice</div>
<svg class="b" style="left:2520.00px;top:1009.00px;" width="32.00" height="32.00" viewBox="0 0 24 24"><path fill="#b14fc4" d="M19.35 10.04C18.67 6.59 15.64 4 12 4c-1.48 0-2.85.43-4.01 1.17l1.46 1.46C10.21 6.23 11.08 6 12 6c3.04 0 5.5 2.46 5.5 5.5v.5H19c1.66 0 3 1.34 3 3 0 1.13-.64 2.11-1.56 2.62l1.45 1.45C23.16 18.16 24 16.68 24 15c0-2.64-2.05-4.78-4.65-4.96zM3 5.27l2.75 2.74C2.56 8.15 0 10.77 0 14c0 3.31 2.69 6 6 6h11.73l2 2L21 20.73 4.27 4 3 5.27zM7.73 10l8 8H6c-2.21 0-4-1.79-4-4s1.79-4 4-4h1.73z"/></svg>
<div class="t" id="path1" style="left:2560.50px;top:1010.75px;font-size:28px;color:#6a1b9a;font-weight:400;-webkit-text-stroke:0.7px #6a1b9a;transform:scaleX(0.9692);transform-origin:0 0;">WatchDog XSLT Export</div>
<div class="t" id="x1" style="left:2962.00px;top:1013.93px;font-size:22px;color:#cfcfcf;font-weight:400;">-</div>
<svg class="b" style="left:3412.00px;top:1000.80px;" width="48.00" height="48.00" viewBox="0 0 24 24"><path fill="#6c6c6c" d="M12 8c1.1 0 2-.9 2-2s-.9-2-2-2-2 .9-2 2 .9 2 2 2zm0 2c-1.1 0-2 .9-2 2s.9 2 2 2 2-.9 2-2-.9-2-2-2zm0 6c-1.1 0-2 .9-2 2s.9 2 2 2 2-.9 2-2-.9-2-2-2z"/></svg>
<div class="b" style="left:481.00px;top:1089.10px;width:36.00px;height:36.00px;background:#fff;border:2px solid #636363;border-radius:5px;box-sizing:border-box;"></div>
<div class="b" style="left:608.8px;top:1066.6px;width:485.400px;height:79.60000000000014px;overflow:hidden;">
<div class="t" id="nm2" style="left:25.60px;top:26.15px;font-size:28px;font-weight:700;color:#3b3b3b;transform:scaleX(0.9667);transform-origin:0 0;">Raffael Test</div>
</div>
<div class="b" style="left:802.00px;top:1091.90px;width:242.80px;height:28.00px;background:#e1bee7;border-radius:7px;"></div>
<svg class="b" style="left:814.60px;top:1096.40px;" width="20.00" height="20.00" viewBox="0 0 24 24"><path fill="#6a1b9a" d="M19.35 10.04C18.67 6.59 15.64 4 12 4c-1.48 0-2.85.43-4.01 1.17l1.46 1.46C10.21 6.23 11.08 6 12 6c3.04 0 5.5 2.46 5.5 5.5v.5H19c1.66 0 3 1.34 3 3 0 1.13-.64 2.11-1.56 2.62l1.45 1.45C23.16 18.16 24 16.68 24 15c0-2.64-2.05-4.78-4.65-4.96zM3 5.27l2.75 2.74C2.56 8.15 0 10.77 0 14c0 3.31 2.69 6 6 6h11.73l2 2L21 20.73 4.27 4 3 5.27zM7.73 10l8 8H6c-2.21 0-4-1.79-4-4s1.79-4 4-4h1.73z"/></svg>
<div class="t" id="idm2" style="left:842.30px;top:1096.47px;font-size:18.6px;color:#6a1b9a;font-weight:700;letter-spacing:0.3px;transform:scaleX(0.9230);transform-origin:0 0;">IDM_ONPREM_SHORT</div>
<div class="b" style="left:1120.10px;top:1084.80px;width:144.90px;height:40.20px;background:#e8f5e9;border-radius:12px;"></div>
<svg class="b" style="left:1135.90px;top:1092.60px;" width="24.00" height="24.00" viewBox="0 0 24 24"><path fill="#2e7d32" d="M4 12l1.41 1.41L11 7.83V20h2V7.83l5.58 5.59L20 12l-8-8-8 8z"/></svg>
<div class="t" id="ty2" style="left:1167.30px;top:1095.16px;font-size:20.2px;color:#2e7d32;font-weight:700;letter-spacing:1.0px;transform:scaleX(0.9067);transform-origin:0 0;">EXPORT</div>
<div class="b" style="left:1440.00px;top:1098.40px;width:16.20px;height:16.20px;background:#9e9e9e;border-radius:50%;"></div>
<div class="t" id="st2" style="left:1471.00px;top:1092.75px;font-size:28px;color:#6a6a6a;font-weight:400;letter-spacing:0.6px;transform:scaleX(1.0408);transform-origin:0 0;">Inactive</div>
<div class="t" id="so2" style="left:1671.00px;top:1092.75px;font-size:28px;color:#6e6e6e;font-weight:400;transform:scaleX(0.9403);transform-origin:0 0;">PJA</div>
<div class="t" id="dt2" style="left:2109.50px;top:1092.75px;font-size:28px;color:#6e6e6e;font-weight:400;transform:scaleX(1.0235);transform-origin:0 0;">Invoice</div>
<svg class="b" style="left:2520.00px;top:1090.60px;" width="32.00" height="32.00" viewBox="0 0 24 24"><path fill="#b14fc4" d="M19.35 10.04C18.67 6.59 15.64 4 12 4c-1.48 0-2.85.43-4.01 1.17l1.46 1.46C10.21 6.23 11.08 6 12 6c3.04 0 5.5 2.46 5.5 5.5v.5H19c1.66 0 3 1.34 3 3 0 1.13-.64 2.11-1.56 2.62l1.45 1.45C23.16 18.16 24 16.68 24 15c0-2.64-2.05-4.78-4.65-4.96zM3 5.27l2.75 2.74C2.56 8.15 0 10.77 0 14c0 3.31 2.69 6 6 6h11.73l2 2L21 20.73 4.27 4 3 5.27zM7.73 10l8 8H6c-2.21 0-4-1.79-4-4s1.79-4 4-4h1.73z"/></svg>
<div class="t" id="path2" style="left:2559.50px;top:1092.35px;font-size:28px;color:#6a1b9a;font-weight:400;-webkit-text-stroke:0.7px #6a1b9a;transform:scaleX(1.0079);transform-origin:0 0;">infor_idm_onpremise</div>
<div class="t" id="x2" style="left:2962.00px;top:1095.53px;font-size:22px;color:#cfcfcf;font-weight:400;">-</div>
<svg class="b" style="left:3412.00px;top:1082.40px;" width="48.00" height="48.00" viewBox="0 0 24 24"><path fill="#6c6c6c" d="M12 8c1.1 0 2-.9 2-2s-.9-2-2-2-2 .9-2 2 .9 2 2 2zm0 2c-1.1 0-2 .9-2 2s.9 2 2 2 2-.9 2-2-.9-2-2-2zm0 6c-1.1 0-2 .9-2 2s.9 2 2 2 2-.9 2-2-.9-2-2-2z"/></svg>
<div class="b" style="left:481.00px;top:1170.65px;width:36.00px;height:36.00px;background:#fff;border:2px solid #636363;border-radius:5px;box-sizing:border-box;"></div>
<div class="b" style="left:608.8px;top:1148.2px;width:485.400px;height:79.5px;overflow:hidden;">
<div class="t" id="nm3" style="left:26.60px;top:26.10px;font-size:28px;font-weight:700;color:#3b3b3b;transform:scaleX(0.961);transform-origin:0 0;">Test</div>
</div>
<div class="b" style="left:706.00px;top:1173.45px;width:242.80px;height:28.00px;background:#e1bee7;border-radius:7px;"></div>
<svg class="b" style="left:718.60px;top:1177.95px;" width="20.00" height="20.00" viewBox="0 0 24 24"><path fill="#6a1b9a" d="M19.35 10.04C18.67 6.59 15.64 4 12 4c-1.48 0-2.85.43-4.01 1.17l1.46 1.46C10.21 6.23 11.08 6 12 6c3.04 0 5.5 2.46 5.5 5.5v.5H19c1.66 0 3 1.34 3 3 0 1.13-.64 2.11-1.56 2.62l1.45 1.45C23.16 18.16 24 16.68 24 15c0-2.64-2.05-4.78-4.65-4.96zM3 5.27l2.75 2.74C2.56 8.15 0 10.77 0 14c0 3.31 2.69 6 6 6h11.73l2 2L21 20.73 4.27 4 3 5.27zM7.73 10l8 8H6c-2.21 0-4-1.79-4-4s1.79-4 4-4h1.73z"/></svg>
<div class="t" id="idm3" style="left:746.30px;top:1178.02px;font-size:18.6px;color:#6a1b9a;font-weight:700;letter-spacing:0.3px;transform:scaleX(0.9226);transform-origin:0 0;">IDM_ONPREM_SHORT</div>
<div class="b" style="left:1120.10px;top:1166.35px;width:144.90px;height:40.20px;background:#e8f5e9;border-radius:12px;"></div>
<svg class="b" style="left:1135.90px;top:1174.15px;" width="24.00" height="24.00" viewBox="0 0 24 24"><path fill="#2e7d32" d="M4 12l1.41 1.41L11 7.83V20h2V7.83l5.58 5.59L20 12l-8-8-8 8z"/></svg>
<div class="t" id="ty3" style="left:1167.30px;top:1176.71px;font-size:20.2px;color:#2e7d32;font-weight:700;letter-spacing:1.0px;transform:scaleX(0.9067);transform-origin:0 0;">EXPORT</div>
<div class="b" style="left:1440.00px;top:1179.95px;width:16.20px;height:16.20px;background:#9e9e9e;border-radius:50%;"></div>
<div class="t" id="st3" style="left:1471.00px;top:1174.30px;font-size:28px;color:#6a6a6a;font-weight:400;letter-spacing:0.6px;transform:scaleX(1.0408);transform-origin:0 0;">Inactive</div>
<div class="t" id="so3" style="left:1671.00px;top:1174.30px;font-size:28px;color:#6e6e6e;font-weight:400;transform:scaleX(0.9403);transform-origin:0 0;">PJA</div>
<div class="t" id="dt3" style="left:2109.50px;top:1174.30px;font-size:28px;color:#6e6e6e;font-weight:400;transform:scaleX(1.0235);transform-origin:0 0;">Invoice</div>
<svg class="b" style="left:2520.00px;top:1172.15px;" width="32.00" height="32.00" viewBox="0 0 24 24"><path fill="#b14fc4" d="M19.35 10.04C18.67 6.59 15.64 4 12 4c-1.48 0-2.85.43-4.01 1.17l1.46 1.46C10.21 6.23 11.08 6 12 6c3.04 0 5.5 2.46 5.5 5.5v.5H19c1.66 0 3 1.34 3 3 0 1.13-.64 2.11-1.56 2.62l1.45 1.45C23.16 18.16 24 16.68 24 15c0-2.64-2.05-4.78-4.65-4.96zM3 5.27l2.75 2.74C2.56 8.15 0 10.77 0 14c0 3.31 2.69 6 6 6h11.73l2 2L21 20.73 4.27 4 3 5.27zM7.73 10l8 8H6c-2.21 0-4-1.79-4-4s1.79-4 4-4h1.73z"/></svg>
<div class="t" id="path3" style="left:2559.50px;top:1173.90px;font-size:28px;color:#6a1b9a;font-weight:400;-webkit-text-stroke:0.7px #6a1b9a;transform:scaleX(1.0079);transform-origin:0 0;">infor_idm_onpremise</div>
<div class="t" id="x3" style="left:2962.00px;top:1177.08px;font-size:22px;color:#cfcfcf;font-weight:400;">-</div>
<svg class="b" style="left:3412.00px;top:1163.95px;" width="48.00" height="48.00" viewBox="0 0 24 24"><path fill="#6c6c6c" d="M12 8c1.1 0 2-.9 2-2s-.9-2-2-2-2 .9-2 2 .9 2 2 2zm0 2c-1.1 0-2 .9-2 2s.9 2 2 2 2-.9 2-2-.9-2-2-2zm0 6c-1.1 0-2 .9-2 2s.9 2 2 2 2-.9 2-2-.9-2-2-2z"/></svg>
</body></html>
